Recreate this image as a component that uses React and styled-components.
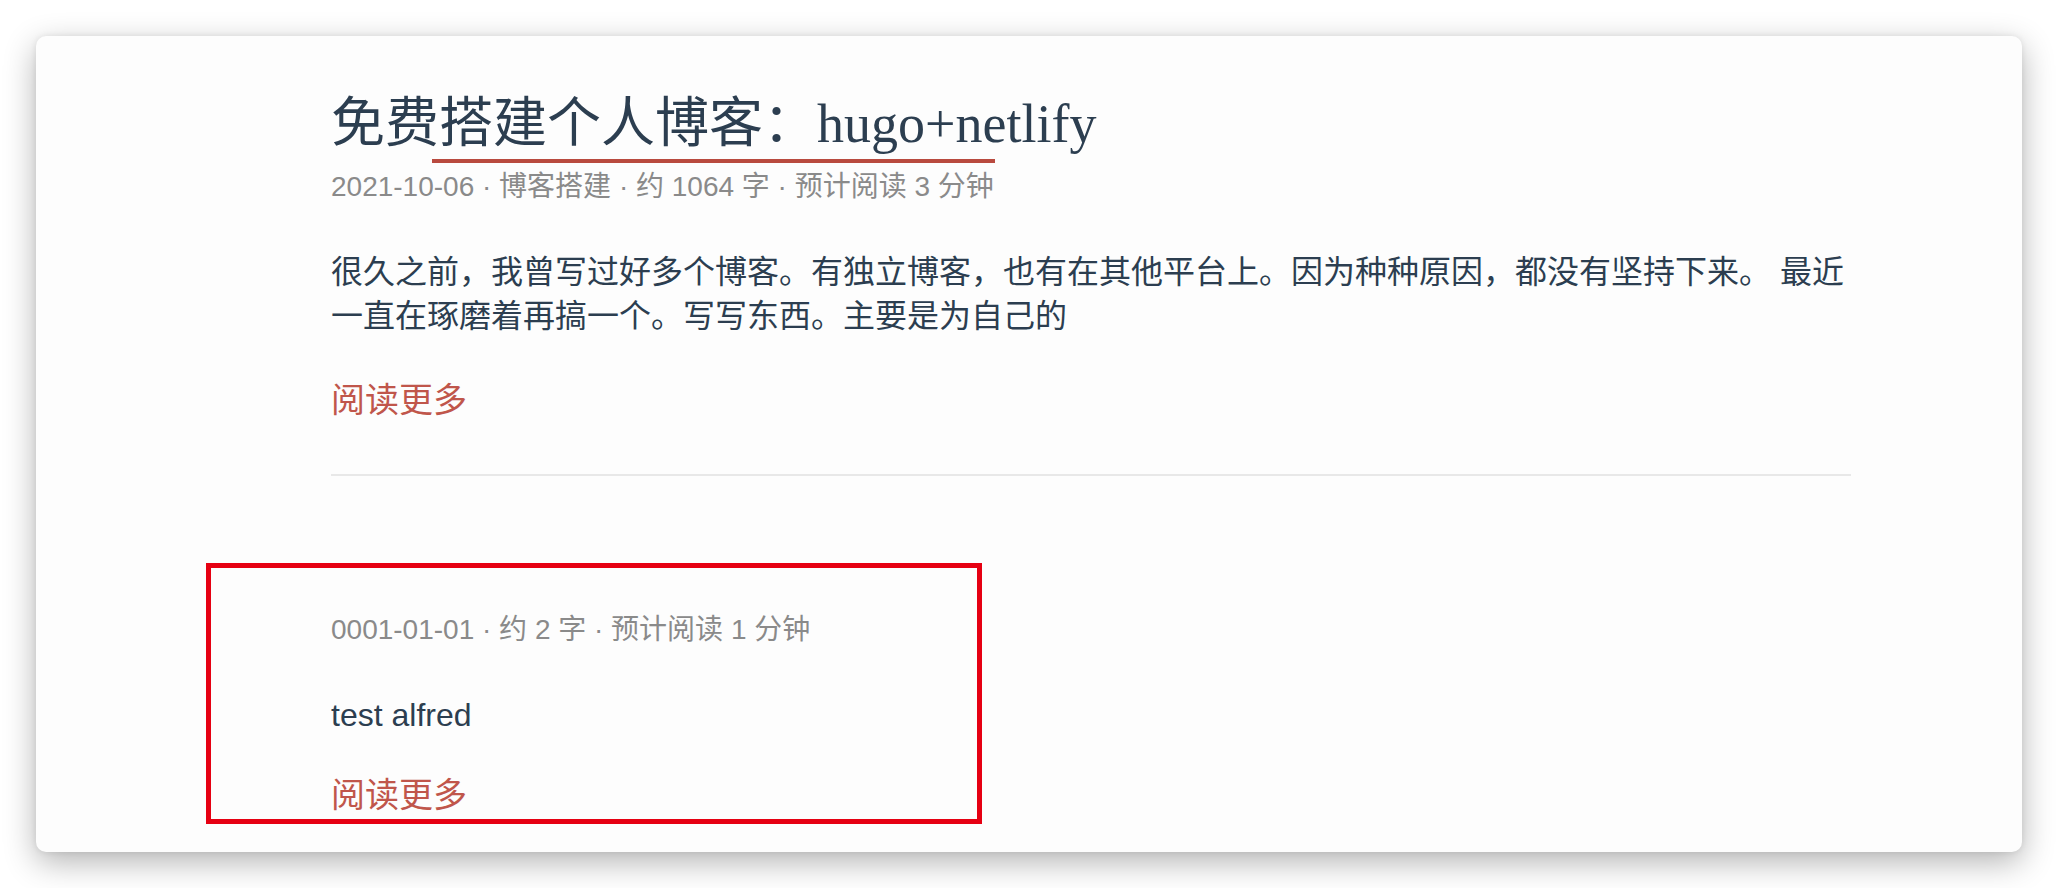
import React from 'react'
import styled, { createGlobalStyle } from 'styled-components'

const GlobalStyle = createGlobalStyle`
  html, body {
    margin: 0;
    padding: 0;
    background: #ffffff;
  }
  body {
    font-family: "Liberation Sans", "Noto Sans CJK SC", sans-serif;
  }
`

const Page = styled.div`
  padding: 36px;
  box-sizing: border-box;
  width: 2058px;
  min-height: 888px;
`

const Card = styled.main`
  background: #fdfdfd;
  border-radius: 10px;
  box-shadow: 0 10px 32px rgba(0, 0, 0, 0.3), 0 0 6px rgba(0, 0, 0, 0.08);
  padding: 56px 171px 27px 295px;
  box-sizing: border-box;
  min-height: 816px;
`

const Post = styled.article`
  display: flex;
  flex-direction: column;
  align-items: flex-start;
`

const Title = styled.h2`
  display: flex;
  margin: 0;
  font-weight: 400;
`

const TitleLink = styled.a`
  font-family: "Liberation Serif", "Noto Sans CJK SC", serif;
  font-size: 54px;
  line-height: 64px;
  color: #2c3e50;
  text-decoration: none;
  padding-bottom: 7px;
  background: linear-gradient(#b94a3f, #b94a3f) no-repeat;
  background-size: 73.6% 4px;
  background-position: 50% 100%;
`

const Meta = styled.div`
  font-size: 28px;
  line-height: 40px;
  color: #8a8a8a;
  margin-top: ${({ $top }) => $top}px;
`

const Summary = styled.p`
  margin: 43px 0 0;
  font-size: 32px;
  line-height: 44px;
  color: #2c3e50;
`

const ReadMore = styled.a`
  margin-top: ${({ $top }) => $top}px;
  font-size: 34px;
  line-height: 44px;
  color: #c0564b;
  text-decoration: none;
`

const Divider = styled.hr`
  border: none;
  height: 2px;
  background: #e8e8e8;
  margin: 52px 0 0;
`

const Highlight = styled.div`
  margin: 87px 0 0 -125px;
  width: 776px;
  box-sizing: border-box;
  border: 5px solid #e60012;
  padding: 42px 0 2px 120px;
`

export default function App() {
  return (
    <>
      <GlobalStyle />
      <Page>
        <Card>
          <Post>
            <Title>
              <TitleLink href="#">免费搭建个人博客：hugo+netlify</TitleLink>
            </Title>
            <Meta $top={4}>2021-10-06 · 博客搭建 · 约 1064 字 · 预计阅读 3 分钟</Meta>
            <Summary>
              很久之前，我曾写过好多个博客。有独立博客，也有在其他平台上。因为种种原因，都没有坚持下来。 最近一直在琢磨着再搞一个。写写东西。主要是为自己的
            </Summary>
            <ReadMore href="#" $top={40}>阅读更多</ReadMore>
          </Post>
          <Divider />
          <Highlight>
            <Post>
              <Meta $top={0}>0001-01-01 · 约 2 字 · 预计阅读 1 分钟</Meta>
              <Summary>test alfred</Summary>
              <ReadMore href="#" $top={36}>阅读更多</ReadMore>
            </Post>
          </Highlight>
        </Card>
      </Page>
    </>
  )
}
